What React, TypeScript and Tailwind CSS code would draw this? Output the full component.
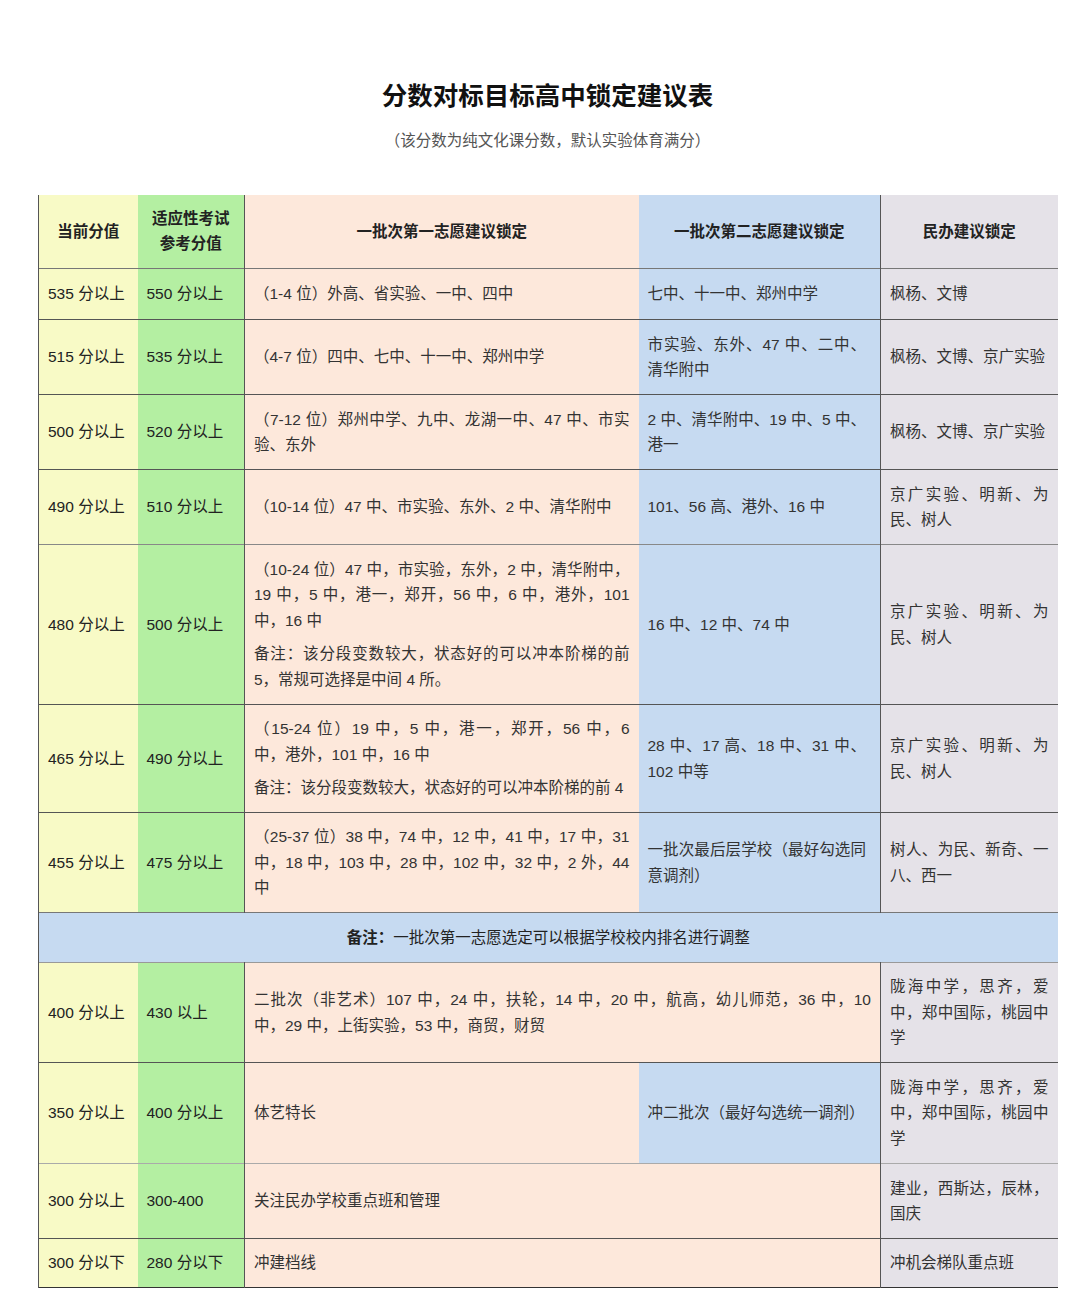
import type { ReactNode } from 'react'

const FONT = { fontFamily: '"Liberation Sans", "Noto Sans CJK SC", sans-serif' }

const Y = 'bg-[#f8fac6]'
const G = 'bg-[#b4efa2]'
const P = 'bg-[#fde8db]'
const B = 'bg-[#c6daf1]'
const L = 'bg-[#e5e2e8]'

const td = 'px-[9px] align-middle text-justify'
// second-choice column wraps a little earlier in the source
const tdB = 'pl-[9px] pr-[14px] align-middle text-justify'

function Row({ h, line = 'border-[#555]', children }: { h: string; line?: string; children: ReactNode }) {
  return <tr className={`${h} border-b ${line}`}>{children}</tr>
}

function Score({ a, b }: { a: string; b: string }) {
  return (
    <>
      <td className={`${td} ${Y} border-l border-[#555] text-[#222]`}>{a}</td>
      <td className={`${td} ${G} border-r border-[#555] text-[#222]`}>{b}</td>
    </>
  )
}

export default function App() {
  return (
    <div className="min-h-screen bg-white text-[15.5px] leading-[25.5px] text-[#333]" style={FONT}>
      <div className="ml-[38px] w-[1019px] pt-[78px]">
        <h1 className="text-center text-[25.5px] leading-[36px] font-bold text-[#111]">分数对标目标高中锁定建议表</h1>
        <p className="mt-[14px] text-center text-[#555]">（该分数为纯文化课分数，默认实验体育满分）</p>

        <table className="mt-[41px] w-[1019px] table-fixed border-collapse">
          <colgroup>
            <col className="w-[99px]" />
            <col className="w-[107px]" />
            <col className="w-[394px]" />
            <col className="w-[242px]" />
            <col className="w-[177px]" />
          </colgroup>
          <tbody>
            <tr className="h-[74px] border-b border-[#777] font-bold text-[#222]">
              <td className={`${Y} border-l border-[#555] text-center`}>当前分值</td>
              <td className={`${G} border-r border-[#555] text-center`}>
                适应性考试
                <br />
                参考分值
              </td>
              <td className={`${P} text-center`}>一批次第一志愿建议锁定</td>
              <td className={`${B} border-r border-[#555] text-center`}>一批次第二志愿建议锁定</td>
              <td className={`${L} text-center`}>民办建议锁定</td>
            </tr>

            <Row h="h-[51px]">
              <Score a="535 分以上" b="550 分以上" />
              <td className={`${td} ${P}`}>（1-4 位）外高、省实验、一中、四中</td>
              <td className={`${tdB} ${B} border-r border-[#555]`}>七中、十一中、郑州中学</td>
              <td className={`${td} ${L}`}>枫杨、文博</td>
            </Row>

            <Row h="h-[75px]">
              <Score a="515 分以上" b="535 分以上" />
              <td className={`${td} ${P}`}>（4-7 位）四中、七中、十一中、郑州中学</td>
              <td className={`${tdB} ${B} border-r border-[#555]`}>市实验、东外、47 中、二中、清华附中</td>
              <td className={`${td} ${L}`}>枫杨、文博、京广实验</td>
            </Row>

            <Row h="h-[75px]">
              <Score a="500 分以上" b="520 分以上" />
              <td className={`${td} ${P}`}>（7-12 位）郑州中学、九中、龙湖一中、47 中、市实验、东外</td>
              <td className={`${tdB} ${B} border-r border-[#555]`}>2 中、清华附中、19 中、5 中、港一</td>
              <td className={`${td} ${L}`}>枫杨、文博、京广实验</td>
            </Row>

            <Row h="h-[75px]" line="border-[#888]">
              <Score a="490 分以上" b="510 分以上" />
              <td className={`${td} ${P}`}>（10-14 位）47 中、市实验、东外、2 中、清华附中</td>
              <td className={`${tdB} ${B} border-r border-[#555]`}>101、56 高、港外、16 中</td>
              <td className={`${td} ${L}`}>京广实验、明新、为民、树人</td>
            </Row>

            <Row h="h-[160px]">
              <Score a="480 分以上" b="500 分以上" />
              <td className={`${td} ${P}`}>
                <p>（10-24 位）47 中，市实验，东外，2 中，清华附中，19 中，5 中，港一，郑开，56 中，6 中，港外，101 中，16 中</p>
                <p className="mt-[8px]">备注：该分段变数较大，状态好的可以冲本阶梯的前 5，常规可选择是中间 4 所。</p>
              </td>
              <td className={`${tdB} ${B} border-r border-[#555]`}>16 中、12 中、74 中</td>
              <td className={`${td} ${L}`}>京广实验、明新、为民、树人</td>
            </Row>

            <Row h="h-[108px]">
              <Score a="465 分以上" b="490 分以上" />
              <td className={`${td} ${P}`}>
                <p>（15-24 位）19 中，5 中，港一，郑开，56 中，6 中，港外，101 中，16 中</p>
                <p className="mt-[8px]">备注：该分段变数较大，状态好的可以冲本阶梯的前 4</p>
              </td>
              <td className={`${tdB} ${B} border-r border-[#555]`}>28 中、17 高、18 中、31 中、102 中等</td>
              <td className={`${td} ${L}`}>京广实验、明新、为民、树人</td>
            </Row>

            <Row h="h-[100px]" line="border-[#777]">
              <Score a="455 分以上" b="475 分以上" />
              <td className={`${td} ${P}`}>（25-37 位）38 中，74 中，12 中，41 中，17 中，31 中，18 中，103 中，28 中，102 中，32 中，2 外，44 中</td>
              <td className={`${tdB} ${B} border-r border-[#555]`}>一批次最后层学校（最好勾选同意调剂）</td>
              <td className={`${td} ${L}`}>树人、为民、新奇、一八、西一</td>
            </Row>

            <tr className="h-[50px] border-b border-[#999]">
              <td colSpan={5} className={`${B} border-l border-[#555] text-center text-[#222]`}>
                <span className="font-bold">备注：</span>一批次第一志愿选定可以根据学校校内排名进行调整
              </td>
            </tr>

            <Row h="h-[100px]">
              <Score a="400 分以上" b="430 以上" />
              <td colSpan={2} className={`${td} ${P} border-r border-[#555]`}>
                二批次（非艺术）107 中，24 中，扶轮，14 中，20 中，航高，幼儿师范，36 中，10 中，29 中，上街实验，53 中，商贸，财贸
              </td>
              <td className={`${td} ${L}`}>陇海中学，思齐，爱中，郑中国际，桃园中学</td>
            </Row>

            <Row h="h-[101px]" line="border-[#aaa]">
              <Score a="350 分以上" b="400 分以上" />
              <td className={`${td} ${P}`}>体艺特长</td>
              <td className={`${tdB} ${B} border-r border-[#555]`}>冲二批次（最好勾选统一调剂）</td>
              <td className={`${td} ${L}`}>陇海中学，思齐，爱中，郑中国际，桃园中学</td>
            </Row>

            <Row h="h-[75px]">
              <Score a="300 分以上" b="300-400" />
              <td colSpan={2} className={`${td} ${P} border-r border-[#555]`}>关注民办学校重点班和管理</td>
              <td className={`${td} ${L}`}>建业，西斯达，辰林，国庆</td>
            </Row>

            <Row h="h-[49px]" line="border-[#333]">
              <Score a="300 分以下" b="280 分以下" />
              <td colSpan={2} className={`${td} ${P} border-r border-[#555]`}>冲建档线</td>
              <td className={`${td} ${L}`}>冲机会梯队重点班</td>
            </Row>
          </tbody>
        </table>
      </div>
    </div>
  )
}
